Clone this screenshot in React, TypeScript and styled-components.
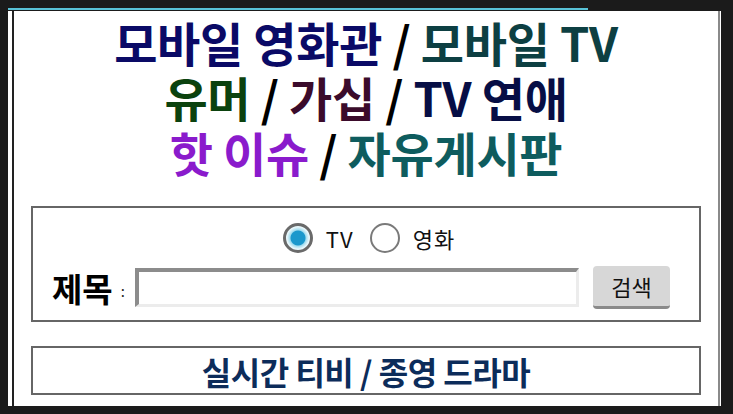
import styled, { createGlobalStyle } from "styled-components";

const GlobalStyle = createGlobalStyle`
  html, body {
    margin: 0;
    background: #1b1b1b;
  }
  body {
    font-family: "Noto Sans CJK KR", "Noto Sans", sans-serif;
  }
`;

const menu = [
  [
    { text: "모바일 영화관", color: "#0a0a66" },
    { text: "모바일 TV", color: "#0d3f42" },
  ],
  [
    { text: "유머", color: "#0b420e" },
    { text: "가십", color: "#3b0b2b" },
    { text: "TV 연애", color: "#070e45" },
  ],
  [
    { text: "핫 이슈", color: "#8a1bcc" },
    { text: "자유게시판", color: "#0e5c5e" },
  ],
];

export default function App() {
  return (
    <>
      <GlobalStyle />
      <Frame>
        <Accent />
        <Panel>
          <Inner>
            <Titles>
              {menu.map((line, i) => (
                <TitleLine key={i}>
                  {line.map((item, j) => (
                    <span key={j}>
                      {j > 0 && <Slash> / </Slash>}
                      <TitleLink $color={item.color}>{item.text}</TitleLink>
                    </span>
                  ))}
                </TitleLine>
              ))}
            </Titles>

            <SearchBox>
              <RadioRow>
                <RadioLabel>
                  <Radio type="radio" name="kind" defaultChecked />
                  TV
                </RadioLabel>
                <RadioLabel>
                  <Radio type="radio" name="kind" />
                  영화
                </RadioLabel>
              </RadioRow>
              <FieldRow>
                <FieldLabel>제목</FieldLabel>
                <Colon>:</Colon>
                <TextInput type="text" />
                <SearchButton>검색</SearchButton>
              </FieldRow>
            </SearchBox>

            <LinkBox>실시간 티비 / 종영 드라마</LinkBox>
          </Inner>
        </Panel>
      </Frame>
    </>
  );
}

const Frame = styled.div`
  padding: 8px 0 0 8px;
  width: 713px;
`;

const Accent = styled.div`
  width: 580px;
  height: 2px;
  margin-bottom: 1px;
  background: #58c2d6;
`;

const Panel = styled.div`
  display: flex;
  height: 395px;
  padding: 0 1px 0 4px;
  background: #fff;
`;

const Inner = styled.div`
  flex: 1;
  display: flex;
  flex-direction: column;
  border-left: 2px solid #222;
  border-right: 2px solid #8a8a8a;
  padding: 3px 17px 0;
`;

const Titles = styled.div`
  display: flex;
  flex-direction: column;
  align-items: center;
`;

const TitleLine = styled.div`
  font-size: 47px;
  font-weight: 700;
  line-height: 55px;
  height: 55px;
  white-space: pre;
  letter-spacing: -0.3px;
`;

const Slash = styled.span`
  color: #000;
`;

const TitleLink = styled.span<{ $color: string }>`
  color: ${(p) => p.$color};
`;

const SearchBox = styled.div`
  box-sizing: border-box;
  margin-top: 27px;
  border: 2px solid #666;
  height: 116px;
  padding: 13px 0 0 19px;
  display: flex;
  flex-direction: column;
  gap: 11px;
`;

const RadioRow = styled.div`
  display: flex;
  justify-content: center;
  align-items: center;
  gap: 16px;
  height: 34px;
  padding-right: 13px;
`;

const RadioLabel = styled.label`
  display: flex;
  align-items: center;
  gap: 13px;
  font-size: 22px;
  color: #111;
  letter-spacing: 1px;
`;

const Radio = styled.input`
  appearance: none;
  margin: 0;
  width: 30px;
  height: 30px;
  border-radius: 50%;
  border: 2px solid #7a7a7a;
  background: #fff;
  box-sizing: border-box;

  &:checked {
    border: 3px solid #6a6a6a;
    background: radial-gradient(circle, #1a98cc 0 7px, #9fdcef 8px, #e8f7fb 11px);
  }
`;

const FieldRow = styled.div`
  display: flex;
  align-items: center;
`;

const FieldLabel = styled.span`
  font-size: 33px;
  font-weight: 700;
  color: #000;
  line-height: 40px;
`;

const Colon = styled.span`
  font-size: 15px;
  margin: 6px 10px 0 8px;
  color: #222;
`;

const TextInput = styled.input`
  width: 444px;
  height: 39px;
  box-sizing: border-box;
  border-style: solid;
  border-width: 4px 3px 3px 4px;
  border-color: #8c8c8c #ececec #ececec #8c8c8c;
  background: #fff;
  outline: none;
`;

const SearchButton = styled.button`
  margin-left: 14px;
  width: 77px;
  height: 43px;
  border: none;
  border-radius: 4px;
  border-bottom: 3px solid #8a8a8a;
  background: #d7d7d7;
  font-family: "Noto Sans CJK KR", sans-serif;
  font-size: 22px;
  color: #111;
  padding: 0;
`;

const LinkBox = styled.div`
  box-sizing: border-box;
  margin-top: 24px;
  height: 49px;
  border: 2px solid #666;
  display: flex;
  align-items: center;
  justify-content: center;
  font-size: 32px;
  font-weight: 700;
  color: #0c2c5a;
  letter-spacing: -0.5px;
`;
